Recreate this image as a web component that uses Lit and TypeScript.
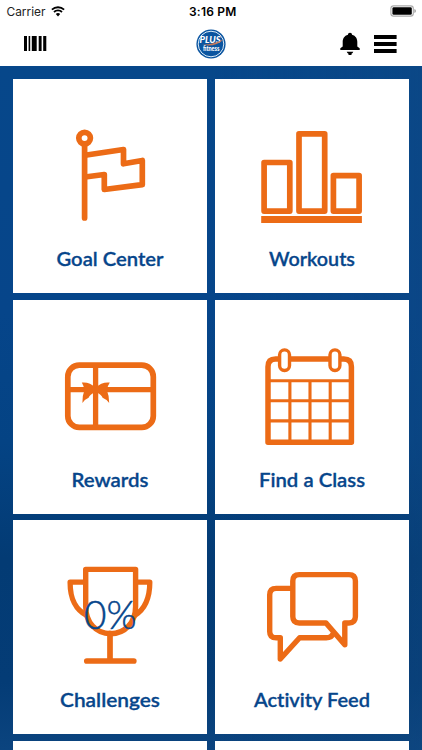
import { LitElement, html, svg, css } from "lit";
import { customElement, property } from "lit/decorators.js";

const flag = svg`
  <circle cx="84.6" cy="138.1" r="5.8"/>
  <path stroke-linecap="round" d="M84.6 144V218"/>
  <path d="M85 155.3L123.5 149.5V163.8L142.3 160.5V184.7L104.3 189.5V174.5L85 177"/>`;

const bars = svg`
  <rect x="263.9" y="162.5" width="25.7" height="48.6"/>
  <rect x="298.8" y="133.8" width="25.7" height="77.3"/>
  <rect x="333.2" y="175.6" width="25.7" height="35.5"/>
  <path stroke-width="7" stroke-linejoin="miter" d="M261 219.6H361.7"/>`;

const giftCard = svg`
  <rect x="67.8" y="365" width="85.5" height="62.2" rx="11.5"/>
  <path stroke-width="5.3" d="M95.6 365V427M68 389.5H153"/>
  <path class="solid" d="M95.6 387.8C91.5 383.4 86.8 381.8 81.8 382.4Q84 386 84.4 390Q82 396 82.4 402.9Q85 399 88.6 397.6Q89.6 394.6 95.6 391.6Q101.6 394.6 102.6 397.6Q106.4 399 109.2 402.9Q109.4 396 106.9 390Q107.4 386 109.8 382.4C104.6 381.8 99.7 383.4 95.6 387.8Z"/>`;

const calendar = svg`
  <path stroke-width="5.5" d="M267.8 442V366.5Q267.8 358.9 275.4 358.9H343.6Q351.2 358.9 351.2 366.5V442Z"/>
  <path stroke-width="3.1" d="M268 380.5H351M268 400.6H351M268 420.7H351M289.7 380.5V442M309.8 380.5V442M330 380.5V442"/>
  <rect class="ring" x="279.4" y="349.7" width="9.9" height="20.6" rx="4.9"/>
  <rect class="ring" x="329.8" y="349.7" width="9.9" height="20.6" rx="4.9"/>`;

const trophy = svg`
  <path stroke-width="5.4" d="M85.7 570H135.6V607C135.6 623 125 634.3 110.4 634.3C96 634.3 85.7 623 85.7 607Z"/>
  <path stroke-width="5.3" d="M85 582.8H70.1C70.1 601 76 610.5 87 616.3M136 582.8H149.8C149.8 601 144 610.5 134.4 616.3"/>
  <path stroke-width="5.7" stroke-linecap="round" d="M110 634V661.5M86.8 661.6H133.8"/>
  <text class="percent" x="84" y="630" textLength="52.5" lengthAdjust="spacingAndGlyphs">0%</text>`;

const chat = svg`
  <path stroke-width="5.4" d="M292.7 589H276Q269.5 589 269.5 595.5V632Q269.5 638.4 276 638.4H280.1V659.6L299.4 638.4H326Q331.5 638.4 333 634"/>
  <path stroke-width="5.4" d="M299 575.2H348.8Q355.2 575.2 355.2 581.6V617.2Q355.2 623.6 348.8 623.6H344.6V645.3L325.8 623.6H299Q292.6 623.6 292.6 617.2V581.6Q292.6 575.2 299 575.2Z"/>`;

const tiles = [
  { label: "Goal Center", width: 107, view: "13 79 194 160", art: flag },
  { label: "Workouts", width: 86, view: "214.8 79 194 160", art: bars },
  { label: "Rewards", width: 77, view: "13 299.8 194 160", art: giftCard },
  { label: "Find a Class", width: 106, view: "214.8 299.8 194 160", art: calendar },
  { label: "Challenges", width: 100, view: "13 520.6 194 160", art: trophy },
  { label: "Activity Feed", width: 116, view: "214.8 520.6 194 160", art: chat },
];

@customElement("menu-tile")
class MenuTile extends LitElement {
  @property({ attribute: false }) tile: any;

  static styles = css`
    :host { display: flex; flex-direction: column; align-items: center; background: #fff; overflow: hidden; }
    svg { display: block; flex: none; }
    .art { width: 194px; height: 160px; fill: none; stroke: #ec6b16; stroke-width: 5.7; stroke-linejoin: round; }
    .solid { fill: #ec6b16; stroke: none; }
    .ring { fill: #fff; stroke-width: 3.4; }
    .percent { font: 300 39px Lato, sans-serif; fill: #07468b; stroke: #07468b; stroke-width: .5; }
    .label { width: 194px; height: 44px; font: 600 20px Lato, "Open Sans", sans-serif; font-variant-ligatures: none; fill: #07468b; stroke: #07468b; stroke-width: .3; text-anchor: middle; }
  `;

  render() {
    if (!this.tile) return null;
    const t = this.tile;
    return html`
      <svg class="art" viewBox=${t.view}>${t.art}</svg>
      <svg class="label" viewBox="0 0 194 44">
        <text x="97" y="26.7" textLength=${t.width} lengthAdjust="spacingAndGlyphs">${t.label}</text>
      </svg>`;
  }
}

@customElement("app-root")
class AppRoot extends LitElement {
  static styles = css`
    :host { display: flex; flex-direction: column; width: 422px; height: 750px; overflow: hidden; background: #fff; font-family: Inter, sans-serif; color: #000; }
    svg { display: block; }
    .status { display: grid; grid-template-columns: 1fr auto 1fr; align-items: center; height: 22px; padding: 0 6px 0 6.5px; font-size: 11.9px; flex: none; }
    .carrier { display: flex; align-items: center; gap: 6px; color: #222; }
    .time { font-weight: 600; font-size: 12px; letter-spacing: 0.2px; padding-left: 3px; }
    .battery { justify-self: end; }
    .nav { display: grid; grid-template-columns: 1fr 30px 1fr; align-items: center; height: 43.5px; padding: 0 25px 0 24px; flex: none; }
    .logo { font: italic 900 8.5px Lato, sans-serif; fill: #fff; }
    .fitness { font: 900 7.4px Lato, sans-serif; }
    .actions { display: flex; align-items: center; justify-content: flex-end; gap: 13px; }
    .bell { margin-right: 1px; }
    .board { flex: 1; min-height: 0; overflow: hidden; padding: 13.3px 13.2px 0 13px;
      background: linear-gradient(90deg, transparent 50%, rgba(18, 72, 128, .35)), linear-gradient(#06478a 0, #06458a 36%, #044384 55%, #033b74 72%, #043c76 90%, #0b447f 100%);
      display: grid; grid-template-columns: 194px 194px; grid-auto-rows: 214px; column-gap: 7.8px; row-gap: 6.8px; }
  `;

  render() {
    return html`
      <div class="status">
        <div class="carrier">Carrier
          <svg width="14" height="11" viewBox="0 0 14 11">
            <path d="M.9 3.7A8.8 8.8 0 0 1 13.1 3.7M3 6A5.8 5.8 0 0 1 11 6" fill="none" stroke="#000" stroke-width="1.8"/>
            <path d="M4.8 8A3.2 3.2 0 0 1 9.2 8L7 10.4Z"/>
          </svg>
        </div>
        <div class="time">3:16 PM</div>
        <svg class="battery" width="26" height="12" viewBox="0 0 26 12">
          <rect x=".9" y=".9" width="22.4" height="10.2" rx="2.7" fill="#fff" stroke="#aaa" stroke-width="1.1"/>
          <rect x="2.4" y="2.3" width="19.4" height="7.4" rx="1.3"/>
          <path d="M24.4 4V8Q25.9 7.4 25.9 6T24.4 4Z" fill="#999"/>
        </svg>
      </div>
      <div class="nav">
        <svg width="23" height="15" viewBox="0 0 23 15">
          <path d="M0 0H3V15H0ZM4.6 0H6.2V15H4.6ZM7.8 0H12.7V15H7.8ZM14.7 0H17.6V15H14.7ZM19.2 0H22.3V15H19.2Z"/>
        </svg>
        <svg width="30" height="30" viewBox="0 0 30 30">
          <circle cx="15" cy="15" r="14.6" fill="#0b55a0"/>
          <circle cx="15" cy="15" r="12.8" fill="#0b55a0" stroke="#dcebf7" stroke-width="1"/>
          <text class="logo" x="3.6" y="13.8" textLength="21" lengthAdjust="spacingAndGlyphs">PLUS</text>
          <path d="M5 15.2Q14 16.6 27 10.8Q22 16.6 12 16.6Z" fill="#c57859"/>
          <text class="logo fitness" x="7" y="22.4" textLength="16.5" lengthAdjust="spacingAndGlyphs">fitness</text>
        </svg>
        <div class="actions">
          <svg class="bell" width="20" height="24" viewBox="0 0 20 24">
            <path d="M10 .7C11.3.7 12 1.5 12 2.8C15.8 3.7 17.3 7 17.3 10V14.5L19.7 16.2V18H.3V16.2L2.7 14.5V10C2.7 7 4.2 3.7 8 2.8C8 1.5 8.7.7 10 .7ZM6.7 19.8H13.3Q12.7 21.2 11.5 21.8V23H8.5V21.8Q7.3 21.2 6.7 19.8Z"/>
          </svg>
          <svg width="23" height="18" viewBox="0 0 23 18">
            <path d="M0 0H22.6V4H0ZM0 7H22.6V11H0ZM0 14.1H22.6V18H0Z"/>
          </svg>
        </div>
      </div>
      <div class="board">
        ${tiles.map((t) => html`<menu-tile .tile=${t}></menu-tile>`)}
        <menu-tile></menu-tile><menu-tile></menu-tile>
      </div>`;
  }
}
